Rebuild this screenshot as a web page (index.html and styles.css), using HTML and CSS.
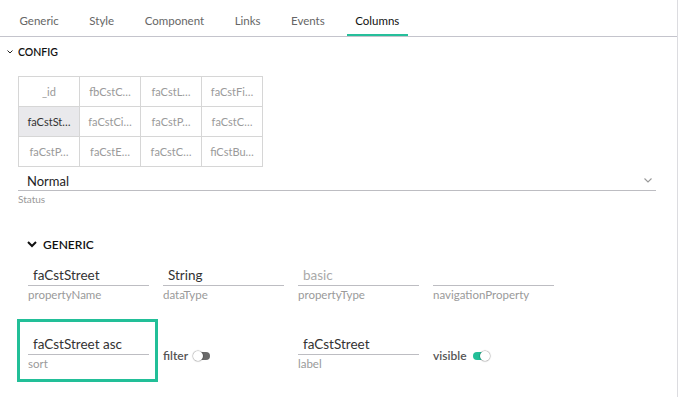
FILE: index.html
```html
<!DOCTYPE html>
<html>
<head>
<meta charset="utf-8">
<link rel="stylesheet" href="styles.css">
</head>
<body>
<div class="panel">
  <nav class="tabs">
    <div class="tab">Generic</div>
    <div class="tab">Style</div>
    <div class="tab">Component</div>
    <div class="tab">Links</div>
    <div class="tab">Events</div>
    <div class="tab active">Columns</div>
  </nav>

  <div class="section-head config-head">
    <svg class="chev-small" width="6" height="4" viewBox="0 0 6 4"><path d="M0.5 0.5 L3 3 L5.5 0.5" fill="none" stroke="#222" stroke-width="1"/></svg>
    <span>CONFIG</span>
  </div>

  <table class="cols">
    <tr><td>_id</td><td>fbCstC…</td><td>faCstL…</td><td>faCstFi…</td></tr>
    <tr><td class="sel">faCstSt…</td><td>faCstCi…</td><td>faCstP…</td><td>faCstC…</td></tr>
    <tr><td>faCstP…</td><td>faCstE…</td><td>faCstC…</td><td>fiCstBu…</td></tr>
  </table>

  <div class="select">
    <div class="select-row">
      <span class="select-val">Normal</span>
      <svg width="8" height="5" viewBox="0 0 8 5"><path d="M0.5 0.5 L4 4 L7.5 0.5" fill="none" stroke="#999" stroke-width="1.1"/></svg>
    </div>
    <div class="select-label">Status</div>
  </div>

  <div class="section-head generic-head">
    <svg class="chev-big" width="10" height="7" viewBox="0 0 10 7"><path d="M1 1 L5 5 L9 1" fill="none" stroke="#111" stroke-width="2"/></svg>
    <span>GENERIC</span>
  </div>

  <div class="fields">
    <div class="field">
      <div class="input">faCstStreet</div>
      <div class="label">propertyName</div>
    </div>
    <div class="field">
      <div class="input">String</div>
      <div class="label">dataType</div>
    </div>
    <div class="field">
      <div class="input muted">basic</div>
      <div class="label">propertyType</div>
    </div>
    <div class="field">
      <div class="input">&nbsp;</div>
      <div class="label">navigationProperty</div>
    </div>

    <div class="field selected">
      <div class="input">faCstStreet asc</div>
      <div class="label">sort</div>
    </div>
    <div class="switch-cell">
      <span class="switch-text">filter</span>
      <span class="switch off"><span class="knob"></span></span>
    </div>
    <div class="field">
      <div class="input">faCstStreet</div>
      <div class="label">label</div>
    </div>
    <div class="switch-cell">
      <span class="switch-text">visible</span>
      <span class="switch on"><span class="knob"></span></span>
    </div>
  </div>
</div>
</body>
</html>
```

FILE: styles.css
```css
* { box-sizing: border-box; }
html, body { margin: 0; padding: 0; background: #fff; }
body {
  font-family: "Lato", "Noto Sans", sans-serif;
  color: #222;
}
.panel {
  width: 678px;
  height: 397px;
  border-right: 1px solid #dcdce0;
  overflow: hidden;
}
.tabs {
  display: flex;
  gap: 13.5px;
  padding-left: 11px;
  border-bottom: 1px solid #c4c4cc;
  height: 37px;
}
.tab {
  height: 36px;
  padding: 13px 8.5px 0;
  font-size: 11.5px;
  line-height: 16px;
  color: #666;
  border-bottom: 2px solid transparent;
}
.tab.active {
  color: #111;
  border-bottom-color: #26bf9b;
}
.section-head {
  display: flex;
  align-items: center;
  text-transform: uppercase;
  color: #111;
}
.config-head {
  margin-top: 7px;
  padding-left: 7px;
  height: 16px;
  gap: 5px;
  font-size: 10.5px;
  font-weight: 600;
}
.cols {
  margin: 16px 0 0 18px;
  border-collapse: collapse;
}
.cols td {
  border: 1px solid #d6d6d6;
  width: 61px;
  max-width: 61px;
  height: 30px;
  padding: 0 6px;
  text-align: center;
  font-size: 11px;
  color: #9a9a9a;
  white-space: nowrap;
  overflow: hidden;
}
.cols td.sel {
  background: #e9e9ec;
  color: #333;
}
.select {
  margin: 4px 21px 0 18px;
}
.select-row {
  display: flex;
  align-items: center;
  justify-content: space-between;
  height: 20px;
  padding: 0 4px 0 9px;
  border-bottom: 1px solid #bdbdc2;
}
.select-val {
  font-size: 13px;
  color: #222;
}
.select-label {
  font-size: 10px;
  line-height: 13px;
  margin-top: 2px;
  color: #999;
}
.generic-head {
  margin-top: 30px;
  padding-left: 27px;
  height: 16px;
  gap: 6px;
  font-size: 12px;
  font-weight: 600;
}
.fields {
  display: grid;
  grid-template-columns: repeat(4, 121px);
  column-gap: 14px;
  row-gap: 32px;
  padding-left: 28px;
  margin-top: 13px;
}
.field {
  display: flex;
  flex-direction: column;
}
.input {
  height: 21px;
  padding: 0 0 0 5px;
  font-size: 13.5px;
  line-height: 20px;
  color: #333;
  border-bottom: 1px solid #bdbdc2;
  white-space: nowrap;
}
.input.muted { color: #aaa; }
.label {
  font-size: 11.5px;
  line-height: 14px;
  margin-top: 2px;
  color: #9a9a9a;
}
.field.selected {
  border: 3px solid #22bf98;
  padding: 12px 6px 8px 8px;
  margin: -15px -9px -11px -11px;
}
.switch-cell {
  display: flex;
  align-items: center;
  gap: 6px;
  height: 21px;
  margin-top: 11px;
}
.switch-text {
  font-size: 12px;
  font-weight: 600;
  color: #555;
}
.switch {
  position: relative;
  width: 16px;
  height: 8px;
  border-radius: 4px;
  display: inline-block;
}
.switch.off { background: #6a6a6a; }
.switch.on { background: #22bf98; }
.knob {
  position: absolute;
  top: -1px;
  width: 10px;
  height: 10px;
  border-radius: 50%;
  background: #fff;
  box-shadow: 0 0 1px 0.5px rgba(0,0,0,0.35);
}
.switch.off .knob { left: -1px; }
.switch.on .knob { right: -1px; }
```
